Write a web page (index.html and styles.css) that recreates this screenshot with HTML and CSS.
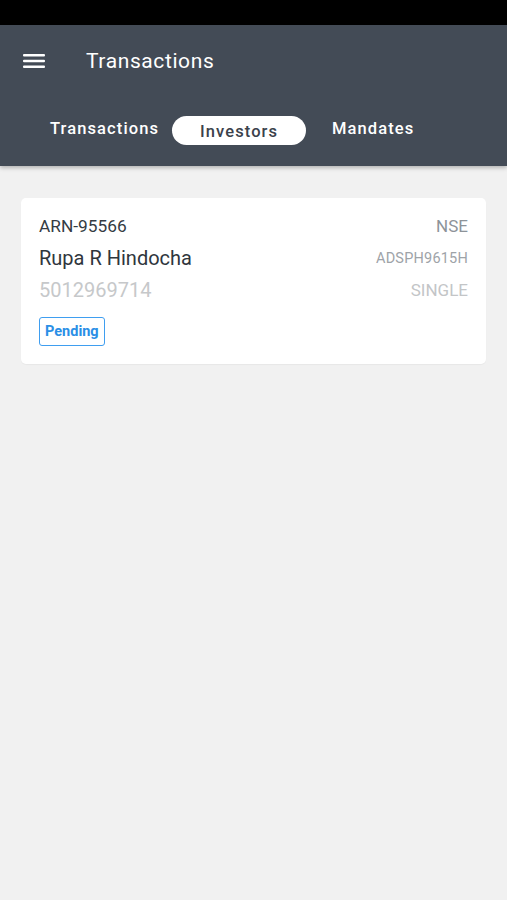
FILE: index.html
```html
<!DOCTYPE html>
<html>
<head>
<meta charset="utf-8">
<link rel="stylesheet" href="styles.css">
</head>
<body>
<div class="status"></div>
<header class="appbar">
  <div class="toolbar">
    <svg class="menu" width="22" height="16" viewBox="0 0 22 16"><rect x="0" y="1" width="22" height="2.4" rx="1" fill="#fff"/><rect x="0" y="6.8" width="22" height="2.4" rx="1" fill="#fff"/><rect x="0" y="12.6" width="22" height="2.4" rx="1" fill="#fff"/></svg>
    <h1 class="title">Transactions</h1>
  </div>
  <nav class="tabs">
    <span class="tab">Transactions</span>
    <span class="tab active">Investors</span>
    <span class="tab last">Mandates</span>
  </nav>
</header>
<main class="content">
  <section class="card">
    <div class="row">
      <span class="arn">ARN-95566</span>
      <span class="exch">NSE</span>
    </div>
    <div class="row">
      <span class="name">Rupa R Hindocha</span>
      <span class="pan">ADSPH9615H</span>
    </div>
    <div class="row">
      <span class="num">5012969714</span>
      <span class="mode">SINGLE</span>
    </div>
    <div class="badge">Pending</div>
  </section>
</main>
</body>
</html>
```
FILE: styles.css
```css
* { box-sizing: border-box; }
html, body { margin: 0; padding: 0; }
body {
  background: #f1f1f1;
  font-family: Roboto, "Noto Sans", sans-serif;
  width: 507px;
  min-height: 900px;
}
.status { height: 25px; background: #000; }
.appbar {
  background: #434b56;
  box-shadow: 0 2px 4px rgba(0,0,0,0.25);
  position: relative;
}
.toolbar {
  height: 72px;
  display: flex;
  align-items: center;
  padding-left: 23px;
}
.menu { display: block; }
.title {
  margin: 0 0 0 41px;
  font-size: 21px;
  font-weight: 400;
  color: #fff;
  letter-spacing: 0.6px;
}
.tabs {
  display: flex;
  align-items: flex-start;
  height: 69px;
  padding: 19px 0 0 50px;
}
.tab {
  font-size: 16.5px;
  font-weight: 500;
  color: #fff;
  letter-spacing: 1.1px;
  line-height: 25px;
}
.tab.active {
  background: #fff;
  color: #3b424b;
  border-radius: 15px;
  width: 134px;
  text-align: center;
  margin-left: 13px;
  padding-top: 2px;
  height: 29px;
  line-height: 27px;
}
.tab.last { margin-left: 26px; }
.content { padding: 32px 21px; }
.card {
  background: #fff;
  border-radius: 5px;
  padding: 12px 18px 18px 18px;
  box-shadow: 0 1px 1px rgba(0,0,0,0.04);
}
.row {
  display: flex;
  justify-content: space-between;
  align-items: center;
  height: 32px;
}
.arn { font-size: 17.3px; color: #343b43; }
.exch { font-size: 17px; color: #8d9399; }
.name { font-size: 20px; color: #2f363d; }
.pan { font-size: 14.5px; color: #9ea3a8; letter-spacing: 0.2px; }
.num { font-size: 20px; color: #c6c8ca; }
.mode { font-size: 17px; color: #c3c5c7; }
.badge {
  display: inline-block;
  margin-top: 11px;
  height: 29px;
  padding: 1px 5px 0 5px;
  border: 1.5px solid #3f9ef0;
  border-radius: 3px;
  color: #2b8fe6;
  font-size: 14.5px;
  font-weight: 700;
  line-height: 26px;
}
```
